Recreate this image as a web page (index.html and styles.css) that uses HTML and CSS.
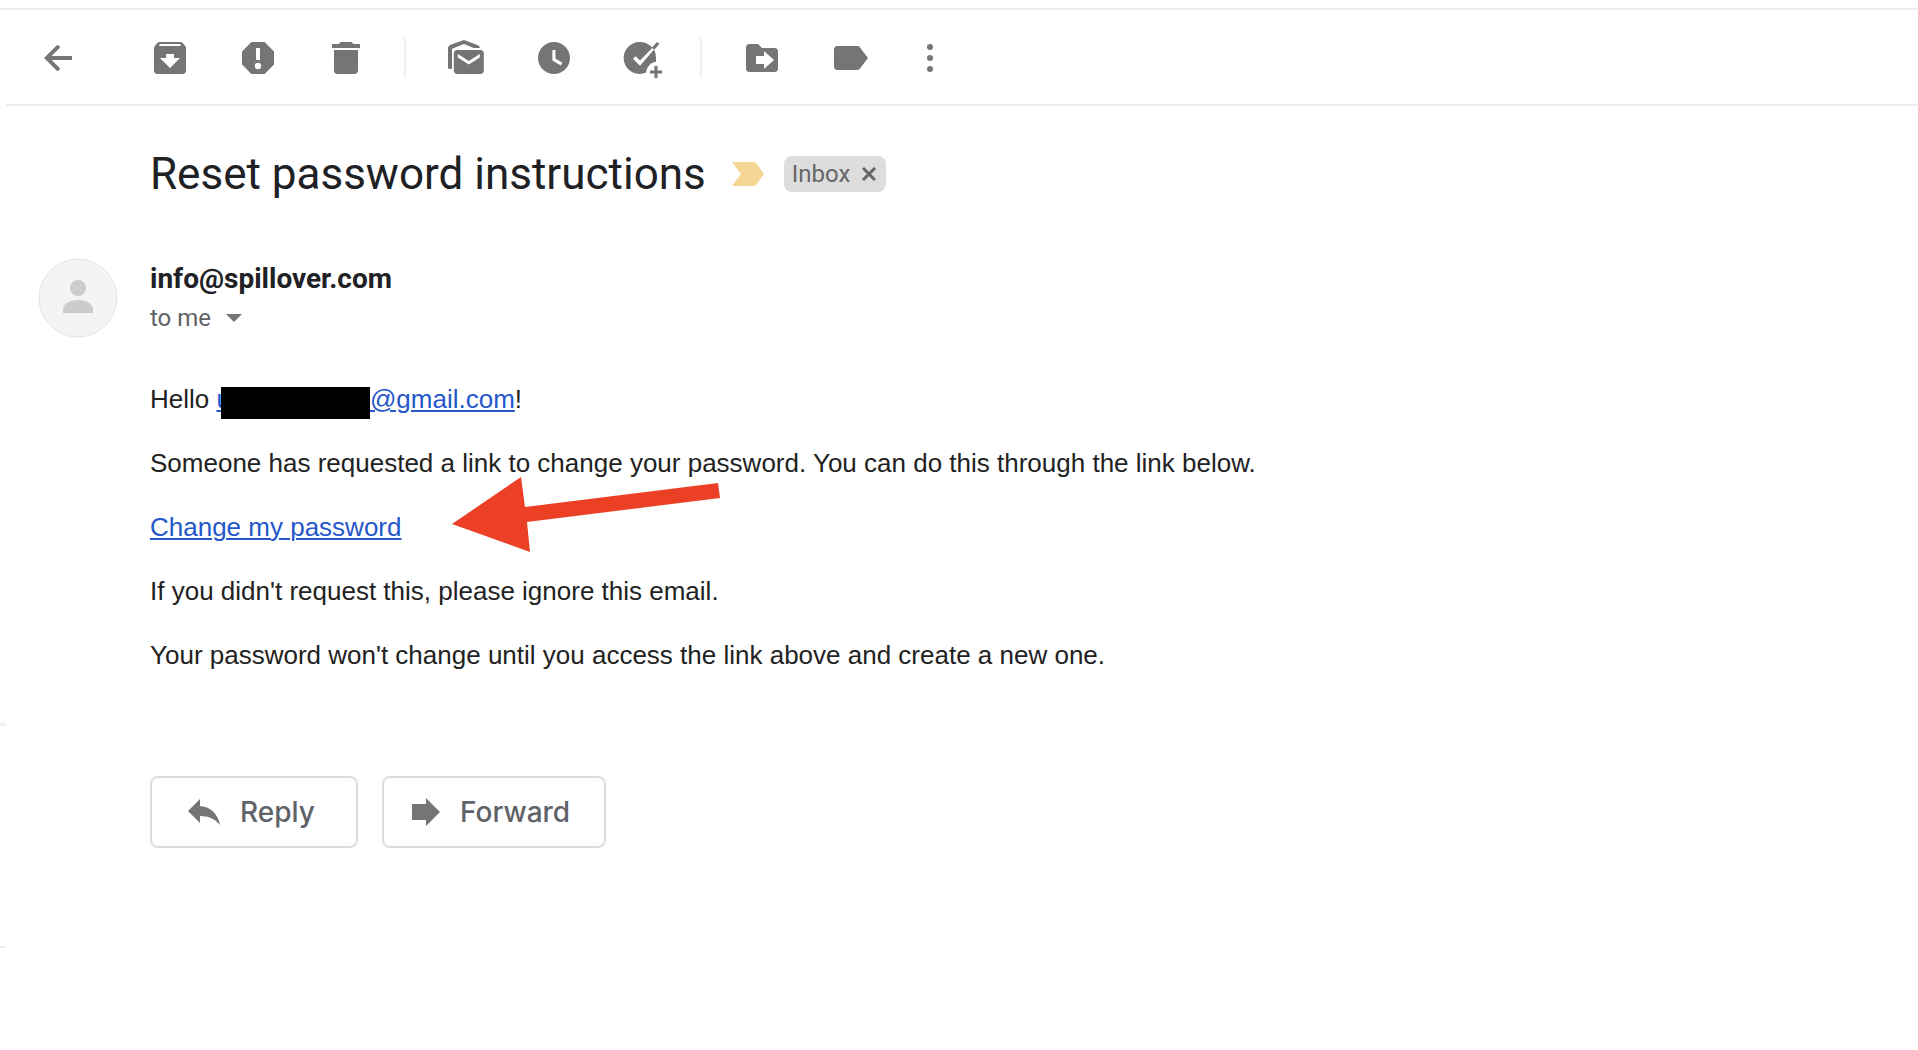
FILE: index.html
```html
<!DOCTYPE html>
<html lang="en">
<head>
<meta charset="utf-8">
<meta name="viewport" content="width=device-width, initial-scale=1">
<title>Reset password instructions</title>
<link rel="stylesheet" href="styles.css">
</head>
<body>
<div class="app">
  <aside class="side">
    <div class="side-block side-top"></div>
    <div class="side-block side-bottom"></div>
  </aside>
  <div class="pane">
    <header class="toolbar" role="toolbar" aria-label="Message actions">
      <button class="tool tool-back" type="button" aria-label="Back"><svg viewBox="0 0 20 20"><path d="M17 9H6.800l3.900-3.900a.8.8 0 0 0 0-1.100l-.3-.3a.8.8 0 0 0-1.100 0L3 10l6.300 6.300c.3.300.800.300 1.100 0l.3-.3a.8.8 0 0 0 0-1.100L6.800 11H17z"/></svg></button>
      <button class="tool" type="button" aria-label="Archive"><svg viewBox="0 0 20 20"><path fill-rule="evenodd" d="M4.7 2h10.6c.4 0 .7.1.9.4L17.6 4c.3.3.4.7.4 1.100V16.300c0 1-.7 1.700-1.700 1.700H3.700C2.700 18 2 17.300 2 16.300V5.100c0-.4.1-.8.4-1.100L3.800 2.400c.2-.3.5-.4.9-.4zM4.400 4h11.200l-.6-1H5zM8 8v2H5l5 5 5-5h-3V8z"/></svg></button>
      <button class="tool" type="button" aria-label="Report spam"><svg viewBox="0 0 20 20"><path fill-rule="evenodd" d="M6.700 2h6.600L18 6.700v6.600L13.300 18H6.700L2 13.300V6.700zM9 5v6h2V5zM10 12.400a1.600 1.600 0 1 0 0 3.200 1.600 1.600 0 0 0 0-3.200z"/></svg></button>
      <button class="tool" type="button" aria-label="Delete"><svg viewBox="0 0 20 20"><path d="M3 3h3.300l1-1h5.400l1 1H17v2H3zM4 6h12v10.300c0 1-.7 1.700-1.700 1.700H5.700C4.700 18 4 17.300 4 16.300z"/></svg></button>
      <span class="divider"></span>
      <button class="tool" type="button" aria-label="Mark as unread"><svg viewBox="0 0 20 20"><path fill-rule="evenodd" d="M1 15V5.200c0-.8.4-1.300 1-1.700L9 1l7 2.600c.6.300.9.8.9 1.400h-3L9 3 3 5.400V15.500C1.700 15.500 1 15.400 1 15zM5.500 6h11.800c.9 0 1.600.7 1.600 1.600v8.800c0 .9-.7 1.600-1.600 1.600H5.500c-.9 0-1.600-.7-1.600-1.600V7.600C3.900 6.700 4.600 6 5.500 6zM5.900 8v1.700l5.500 3.500 5.500-3.500V8l-5.500 3.500z"/></svg></button>
      <button class="tool" type="button" aria-label="Snooze"><svg viewBox="0 0 20 20"><path fill-rule="evenodd" d="M10 2a8 8 0 1 0 0 16 8 8 0 0 0 0-16zM9.200 6v5.200l4.200 2.500.8-1.300-3.500-2.100V6z"/></svg></button>
      <button class="tool" type="button" aria-label="Add to tasks"><svg viewBox="0 0 20 20"><path d="M9 2c2 0 3.800.700 5.200 1.900l1 1L9 11.300 6.800 9.100 5.500 10.400 9 13.900l7-8.100A8 8 0 0 1 17 10v1.900c-2.600.3-4.700 2.400-4.900 5.400A8 8 0 1 1 9 2zM17.500 2l1.200 1-2.600 2.900-1.200-1zM16.200 14h1.600v2.200H20v1.600h-2.200V20h-1.600v-2.200H14v-1.600h2.200z"/></svg></button>
      <span class="divider"></span>
      <button class="tool" type="button" aria-label="Move to"><svg viewBox="0 0 20 20"><path fill-rule="evenodd" d="M3.600 3H8l2 2h6.400c.9 0 1.600.7 1.600 1.600v8.800c0 .9-.7 1.600-1.600 1.600H3.600C2.700 17 2 16.300 2 15.400V4.600C2 3.700 2.700 3 3.600 3zM11 6.500V9H7v4h4v2.500l5-4.500z"/></svg></button>
      <button class="tool" type="button" aria-label="Labels"><svg viewBox="0 0 20 20"><path d="M3.600 4H13.500c.7 0 1.200.2 1.500.7L19 10l-4 5.300c-.3.500-.8.700-1.500.7H3.600C2.700 16 2 15.300 2 14.400V5.600C2 4.700 2.700 4 3.600 4z"/></svg></button>
      <button class="tool tool-more" type="button" aria-label="More"><svg viewBox="0 0 20 20"><circle cx="10" cy="4.500" r="1.500"/><circle cx="10" cy="10" r="1.500"/><circle cx="10" cy="15.500" r="1.500"/></svg></button>
    </header>

    <main class="message">
      <div class="subject">
        <h1>Reset password instructions</h1>
        <svg class="marker" viewBox="0 0 16 12" role="img" aria-label="Important"><path d="M0 0h10.600c.8 0 1.300.2 1.700.7L16 6l-3.700 5.300c-.4.5-.9.700-1.700.7H0l4.500-6z"/></svg>
        <span class="chip">Inbox<button class="chip-close" type="button" aria-label="Remove label Inbox"><svg viewBox="0 0 14 14"><path d="M1 1l12 12M13 1L1 13"/></svg></button></span>
      </div>

      <div class="sender">
        <svg class="avatar" viewBox="0 0 80 80" aria-hidden="true"><circle class="avatar-disc" cx="40" cy="40" r="39"/><circle cx="40" cy="30" r="8"/><path d="M25 55v-4c0-5 7-9 15-9s15 4 15 9v4z"/></svg>
        <div class="sender-text">
          <div class="from">info@spillover.com</div>
          <button class="to" type="button">to me<svg viewBox="0 0 16 8"><path d="M0 0h16L8 8z"/></svg></button>
        </div>
      </div>

      <div class="body">
        <p>Hello <a href="#">u<span class="redacted"></span>@gmail.com</a>!</p>
        <p>Someone has requested a link to change your password. You can do this through the link below.</p>
        <p class="pointed"><a href="#">Change my password</a><svg class="arrow" viewBox="0 0 268 75" aria-hidden="true"><path d="M0 47L69 0l4 30L266 6l2 15L75 45l3 30z"/></svg></p>
        <p>If you didn't request this, please ignore this email.</p>
        <p>Your password won't change until you access the link above and create a new one.</p>
      </div>

      <div class="actions">
        <button class="action" type="button"><svg viewBox="0 0 32 26"><path d="M12 0v7c11 1 18 8 20 19-5-6-11-9-20-9v7L0 12z"/></svg>Reply</button>
        <button class="action action-forward" type="button"><svg class="fwd" viewBox="0 0 28 28"><path d="M0 6h14V0l14 14-14 14v-6H0z"/></svg>Forward</button>
      </div>
    </main>
  </div>
</div>
</body>
</html>
```
FILE: styles.css
```css
* { box-sizing: border-box; }

body {
  margin: 0;
  padding-top: 8px;
  background: #fff;
  color: #222;
  font-family: "Liberation Sans", Arial, sans-serif;
}

button {
  margin: 0;
  padding: 0;
  border: 0;
  background: none;
  font: inherit;
  color: inherit;
  cursor: pointer;
}

svg { display: block; flex: none; fill: #757575; }

.app {
  display: grid;
  grid-template-columns: 6px 1fr;
  border-top: 2px solid #eee;
}

.side-block { border-bottom: 2px solid #eee; }
.side-top {
  height: 716px;
  background: linear-gradient(to top, #f5f5f5, #fff 6px);
}
.side-bottom { height: 222px; }

.toolbar {
  display: flex;
  align-items: center;
  gap: 48px;
  height: 96px;
  padding: 2px 0 0 32px;
  border-bottom: 2px solid #eee;
}
.tool svg { width: 40px; height: 40px; }
.tool-back { margin-right: 24px; }
.tool-more { margin-left: -8px; }
.divider {
  width: 2px;
  height: 40px;
  margin: 0 -8px 0 -10px;
  background: #eee;
}

.message { padding: 40px 32px; }

.subject {
  display: flex;
  align-items: center;
  padding-left: 112px;
}
h1 {
  margin: 0;
  font: 400 44px/56px Roboto, sans-serif;
  color: #202124;
}
.marker { width: 32px; height: 24px; margin: 0 20px 0 26px; fill: #f6d694; }
.chip {
  display: flex;
  align-items: center;
  gap: 12px;
  height: 36px;
  padding: 0 10px 0 8px;
  border-radius: 8px;
  background: #ddd;
  color: #666;
  font: 24px/36px Roboto, sans-serif;
}
.chip-close svg { width: 14px; height: 14px; fill: none; stroke: #666; stroke-width: 3; }

.sender { display: flex; gap: 32px; margin-top: 56px; }
.avatar { width: 80px; height: 80px; fill: #ccc; }
.avatar-disc { fill: #f4f4f4; stroke: #e4e4e4; stroke-width: 1; }
.sender-text { font-family: Roboto, sans-serif; }
.from { font-size: 28px; line-height: 42px; font-weight: 700; color: #202124; }
.to {
  display: flex;
  align-items: center;
  gap: 15px;
  font-size: 24px;
  line-height: 36px;
  color: #5f6368;
}
.to svg { width: 16px; height: 8px; }

.body { margin: 41px 0 0 112px; font-size: 26px; line-height: 40px; }
.body p { margin: 0 0 24px; }
.body a { color: #2457c9; text-decoration-thickness: 2px; text-underline-offset: 2px; }
.redacted {
  display: inline-block;
  width: 149px;
  height: 32px;
  margin-left: -10px;
  vertical-align: bottom;
  background: #000;
}
.pointed { position: relative; }
.arrow {
  position: absolute;
  left: 302px;
  top: -30px;
  width: 268px;
  height: 75px;
  fill: #eb4026;
}

.actions { display: flex; gap: 24px; margin: 101px 0 0 112px; }
.action {
  display: flex;
  align-items: center;
  gap: 20px;
  min-width: 208px;
  height: 72px;
  padding: 0 36px;
  border: 2px solid #dadce0;
  border-radius: 8px;
  color: #5f6368;
  font: 500 28px/36px Inter, sans-serif;
}
.action svg { width: 32px; height: 26px; }
.action-forward { min-width: 224px; padding: 0 28px; }
.action .fwd { width: 28px; height: 28px; }
```
